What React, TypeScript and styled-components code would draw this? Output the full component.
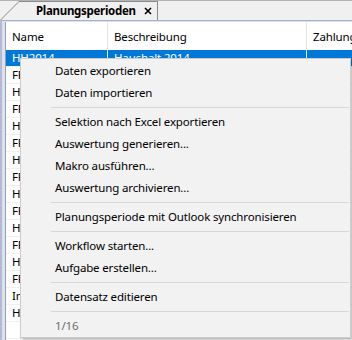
import React from 'react';
import styled, { createGlobalStyle } from 'styled-components';

const GlobalStyle = createGlobalStyle`
  html, body { margin: 0; padding: 0; }
  body {
    background: #f0f0f0;
    font-family: "Noto Sans", "Open Sans", sans-serif;
    font-size: 11.5px;
    letter-spacing: -0.15px;
    color: #000;
  }
`;

const Screen = styled.div`
  position: relative;
  width: 352px;
  height: 340px;
  overflow: hidden;
  background: #f0f0f0;
  display: flex;
  flex-direction: column;
`;

const TabStrip = styled.div`
  flex: none;
  height: 20px;
  box-sizing: border-box;
  border-top: 1px solid #b4b4b4;
  display: flex;
  align-items: stretch;
`;

const Tab = styled.div`
  display: flex;
  align-items: stretch;
`;

const TabSlant = styled.svg`
  display: block;
  width: 20px;
  height: 19px;
`;

const TabBody = styled.div`
  width: 138px;
  flex: none;
  box-sizing: border-box;
  border-top: 1px solid #8a8a8a;
  border-right: 1px solid #8a8a8a;
  display: flex;
  align-items: center;
  padding: 0 5px 0 16px;
  background: #f0f0f0;
`;

const TabLabel = styled.span`
  font-weight: 700;
  font-size: 11.5px;
  letter-spacing: -0.3px;
  line-height: 16px;
  white-space: nowrap;
`;

const CloseIcon = styled.svg`
  margin-left: auto;
  width: 8px;
  height: 8px;
  display: block;
`;

const Panel = styled.div`
  flex: 1;
  min-height: 0;
  display: flex;
  border-top: 1px solid #a5b0cd;
  border-left: 2px solid #b4bad6;
  padding: 1px 0 0 3px;
  background: #dce1ee;
`;

const List = styled.div`
  flex: 1;
  min-width: 0;
  background: #fff;
  border-left: 1px solid #9a9fae;
  display: flex;
  flex-direction: column;
  overflow: hidden;
`;

const Grid = styled.div<{ $selected?: boolean; $header?: boolean }>`
  flex: none;
  display: grid;
  grid-template-columns: 102px 199px 1fr;
  height: ${(p) => (p.$header ? 28 : 17)}px;
  box-sizing: border-box;
  background: ${(p) => (p.$selected ? '#0078d7' : '#fff')};
  color: ${(p) => (p.$selected ? '#fff' : '#000')};
  border-bottom: 1px solid ${(p) => (p.$header ? '#fff' : '#f0f0f0')};
`;

const Cell = styled.div<{ $header?: boolean }>`
  box-sizing: border-box;
  border-right: 1px solid ${(p) => (p.$header ? '#e5e5e5' : '#f0f0f0')};
  padding: ${(p) => (p.$header ? '7px 0 0 6px' : '0 0 0 6px')};
  line-height: 16px;
  white-space: nowrap;
  overflow: hidden;
  &:last-child { border-right: none; }
`;

const Menu = styled.div`
  position: absolute;
  left: 20px;
  top: 58px;
  width: 331px;
  box-sizing: border-box;
  background: #f2f2f2;
  border: 1px solid #cccccc;
  padding: 1px 0 0;
  box-shadow: 2px 2px 3px rgba(0, 0, 0, 0.25);
  display: flex;
  flex-direction: column;
`;

const MenuItem = styled.div<{ $disabled?: boolean }>`
  height: 22px;
  line-height: 22px;
  padding-left: 34px;
  white-space: nowrap;
  color: ${(p) => (p.$disabled ? '#6d6d6d' : '#000')};
`;

const Separator = styled.div`
  height: 1px;
  background: #d7d7d7;
  margin: 3px 1px 3px 30px;
`;

const rows: [string, string, string][] = [
  ['HH2014', 'Haushalt 2014', ''],
  ['FP2014', 'Finanzplan 2014', ''],
  ['HH2015', 'Haushalt 2015', ''],
  ['FP2015', 'Finanzplan 2015', ''],
  ['HH2016', 'Haushalt 2016', ''],
  ['FP2016', 'Finanzplan 2016', ''],
  ['HH2017', 'Haushalt 2017', ''],
  ['FP2017', 'Finanzplan 2017', ''],
  ['HH2018', 'Haushalt 2018', ''],
  ['FP2018', 'Finanzplan 2018', ''],
  ['HH2019', 'Haushalt 2019', ''],
  ['FP2019', 'Finanzplan 2019', ''],
  ['HH2020', 'Haushalt 2020', ''],
  ['FP2020', 'Finanzplan 2020', ''],
  ['Inv2014', 'Investitionen 2014', ''],
  ['HH2021', 'Haushalt 2021', ''],
];

type Entry = 'sep' | { label: string; disabled?: boolean };

const menu: Entry[] = [
  { label: 'Daten exportieren' },
  { label: 'Daten importieren' },
  'sep',
  { label: 'Selektion nach Excel exportieren' },
  { label: 'Auswertung generieren...' },
  { label: 'Makro ausführen...' },
  { label: 'Auswertung archivieren...' },
  'sep',
  { label: 'Planungsperiode mit Outlook synchronisieren' },
  'sep',
  { label: 'Workflow starten...' },
  { label: 'Aufgabe erstellen...' },
  'sep',
  { label: 'Datensatz editieren' },
  'sep',
  { label: '1/16', disabled: true },
];

export default function App() {
  return (
    <>
      <GlobalStyle />
      <Screen>
        <TabStrip>
          <Tab>
            <TabSlant viewBox="0 0 20 19">
              <polygon points="0,19 19,0 20,0 20,19" fill="#f0f0f0" />
              <line x1="0" y1="19.5" x2="19.5" y2="0" stroke="#8a8a8a" strokeWidth="1" />
              <line x1="19" y1="0.5" x2="20" y2="0.5" stroke="#8a8a8a" strokeWidth="1" />
            </TabSlant>
            <TabBody>
              <TabLabel>Planungsperioden</TabLabel>
              <CloseIcon viewBox="0 0 8 8">
                <path d="M1 1 L7 7 M7 1 L1 7" stroke="#000" strokeWidth="1.6" />
              </CloseIcon>
            </TabBody>
          </Tab>
        </TabStrip>
        <Panel>
          <List>
            <Grid $header>
              <Cell $header>Name</Cell>
              <Cell $header>Beschreibung</Cell>
              <Cell $header>Zahlungsziel</Cell>
            </Grid>
            {rows.map((r, i) => (
              <Grid key={i} $selected={i === 0}>
                <Cell>{r[0]}</Cell>
                <Cell>{r[1]}</Cell>
                <Cell>{r[2]}</Cell>
              </Grid>
            ))}
            <Grid>
              <Cell />
              <Cell />
              <Cell />
            </Grid>
          </List>
        </Panel>
        <Menu>
          {menu.map((m, i) =>
            m === 'sep' ? (
              <Separator key={i} />
            ) : (
              <MenuItem key={i} $disabled={!!m.disabled}>
                {m.label}
              </MenuItem>
            )
          )}
        </Menu>
      </Screen>
    </>
  );
}
